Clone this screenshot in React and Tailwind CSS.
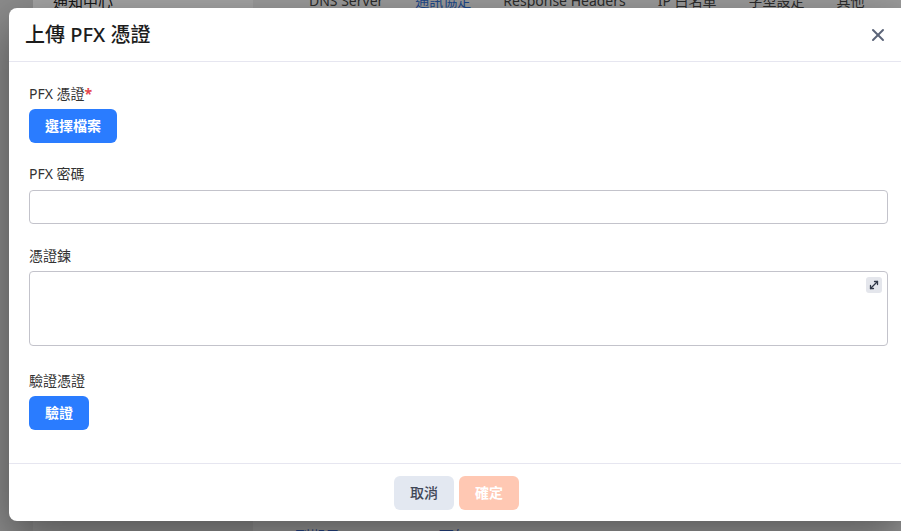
import { X, MoveDiagonal } from "lucide-react";

const tabs = ["DNS Server", "通訊協定", "Response Headers", "IP 白名單", "字型設定", "其他"];

function BackgroundPage() {
  return (
    <div className="flex w-full -mt-[14px]">
      {/* Sidebar */}
      <aside className="flex w-[253px] shrink-0 bg-[#e4e4e4]">
        <div className="w-[33px] shrink-0 bg-[#d8d8d8]" />
        <div className="flex-1 flex flex-col">
          <div className="h-[30px] flex items-center pl-[20px] bg-white text-[15px] text-[#222]">通知中心</div>
          <div className="flex-1" />
        </div>
      </aside>

      {/* Main */}
      <main className="flex-1 flex flex-col bg-[#f2f2f2]">
        <div className="h-[30px] flex items-center pl-[56px] gap-[32px] text-sm text-[#444]">
          {tabs.map((t, i) => (
            <span key={t} className={i === 1 ? "text-[#2f6fd6]" : ""}>
              {t}
            </span>
          ))}
        </div>
        <div className="h-[509px]" />
        <div className="h-[40px] pl-[42px] text-[15px] leading-[22px] text-[#3c6ad0]">到期日：2025/11/25 下午2:40:18</div>
      </main>
    </div>
  );
}

function Label({ children, required }) {
  return (
    <div className="text-sm leading-5 text-[#333]">
      {children}
      {required && <span className="text-[#e5484d] text-sm font-bold">*</span>}
    </div>
  );
}

export default function App() {
  return (
    <div className="relative w-[901px] h-[531px] overflow-hidden font-['Noto_Sans','Noto_Sans_CJK_TC',sans-serif]">
      <BackgroundPage />

      {/* Overlay */}
      <div className="absolute inset-0 bg-black/35" />

      {/* Modal */}
      <div className="absolute left-[9px] top-[8px] w-[899px] h-[513px] flex flex-col rounded-lg bg-white shadow-[0_16px_48px_rgba(0,0,0,0.45)]">
        {/* Header */}
        <div className="h-[54px] shrink-0 flex items-center justify-between pl-4 pr-5 border-b border-[#e6e6f0]">
          <h2 className="text-[20px] font-medium text-[#1c1c1c]">上傳 PFX 憑證</h2>
          <button className="text-[#5b6478]">
            <X size={20} strokeWidth={2.4} />
          </button>
        </div>

        {/* Body */}
        <div className="flex-1 flex flex-col px-5 pt-[22px]">
          <Label required>PFX 憑證</Label>
          <button className="mt-[5px] h-[34px] w-fit px-4 rounded-md bg-[#2a7cff] text-white text-sm font-bold">
            選擇檔案
          </button>

          <div className="mt-[21px]">
            <Label>PFX 密碼</Label>
          </div>
          <input
            type="password"
            className="mt-[6px] h-[34px] w-full rounded border border-[#c3c3cb] px-3 text-sm outline-none"
          />

          <div className="mt-[22px]">
            <Label>憑證鍊</Label>
          </div>
          <div className="relative mt-[5px]">
            <textarea className="block h-[75px] w-full resize-none rounded border border-[#c3c3cb] px-3 py-2 text-sm outline-none" />
            <span className="absolute right-[6px] top-[6px] flex h-4 w-4 items-center justify-center rounded-[3px] bg-[#e4e6ec] text-[#303848]">
              <MoveDiagonal size={12} strokeWidth={2.6} />
            </span>
          </div>

          <div className="mt-[25px]">
            <Label>驗證憑證</Label>
          </div>
          <button className="mt-[5px] h-[34px] w-fit px-4 rounded-md bg-[#2a7cff] text-white text-sm font-bold">
            驗證
          </button>
        </div>

        {/* Footer */}
        <div className="h-[58px] shrink-0 flex items-center justify-center gap-[5px] border-t border-[#e6e6f0] pr-[4px]">
          <button className="h-[34px] w-[60px] rounded-md bg-[#e3e8f1] text-sm font-medium text-[#3f4656]">取消</button>
          <button className="h-[34px] w-[60px] rounded-md bg-[#ffc8b3] text-sm font-bold text-white">確定</button>
        </div>
      </div>
    </div>
  );
}
